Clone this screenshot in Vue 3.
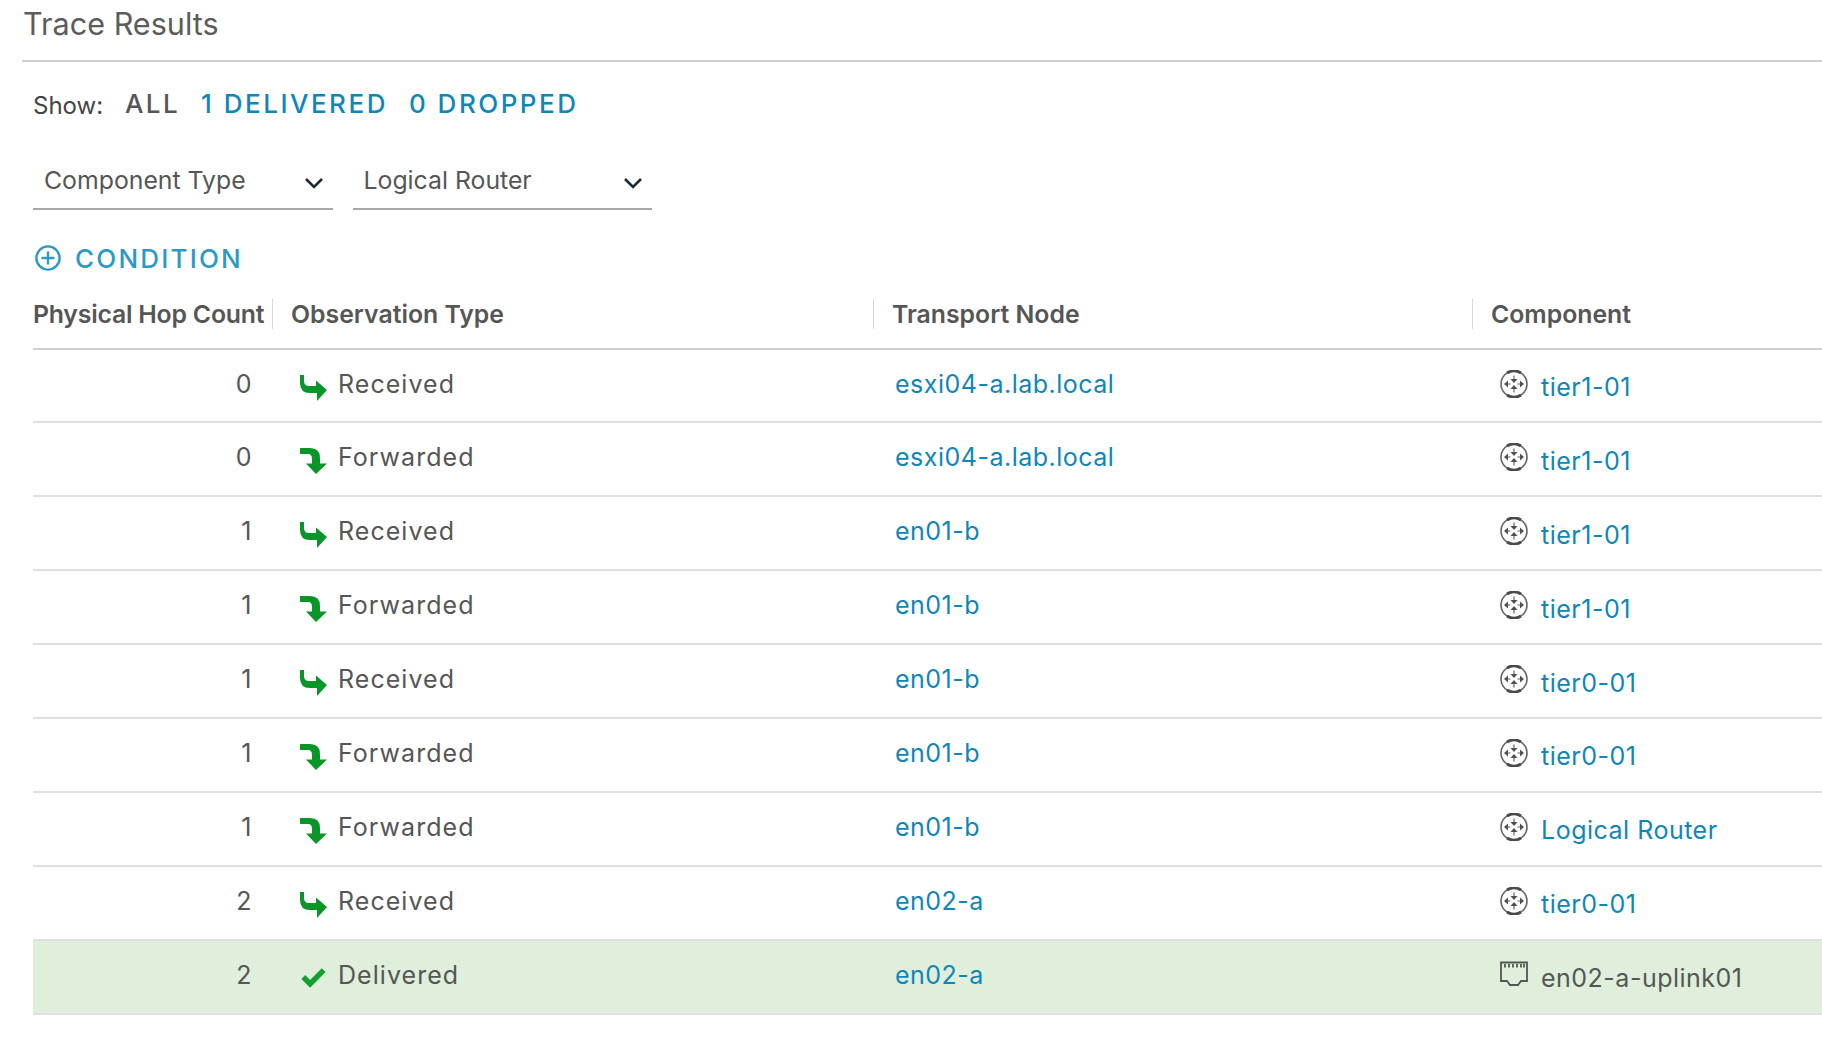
<script setup>
const rows = [
  { hop: 0, type: 'Received', node: 'esxi04-a.lab.local', comp: 'tier1-01' },
  { hop: 0, type: 'Forwarded', node: 'esxi04-a.lab.local', comp: 'tier1-01' },
  { hop: 1, type: 'Received', node: 'en01-b', comp: 'tier1-01' },
  { hop: 1, type: 'Forwarded', node: 'en01-b', comp: 'tier1-01' },
  { hop: 1, type: 'Received', node: 'en01-b', comp: 'tier0-01' },
  { hop: 1, type: 'Forwarded', node: 'en01-b', comp: 'tier0-01' },
  { hop: 1, type: 'Forwarded', node: 'en01-b', comp: 'Logical Router' },
  { hop: 2, type: 'Received', node: 'en02-a', comp: 'tier0-01' },
  { hop: 2, type: 'Delivered', node: 'en02-a', comp: 'en02-a-uplink01', delivered: true },
]
</script>

<template>
  <div class="page">
    <h2 class="title">Trace Results</h2>

    <div class="show">
      <span class="show-label">Show:</span>
      <span class="tab all">ALL</span>
      <span class="tab">1 DELIVERED</span>
      <span class="tab">0 DROPPED</span>
    </div>

    <div class="filters">
      <div class="select">
        <span>Component Type</span>
        <svg class="chev" viewBox="0 0 20 12"><path d="M2 2l8 8 8-8" /></svg>
      </div>
      <div class="select">
        <span>Logical Router</span>
        <svg class="chev" viewBox="0 0 20 12"><path d="M2 2l8 8 8-8" /></svg>
      </div>
    </div>

    <div class="condition">
      <svg class="plus" viewBox="0 0 26 26">
        <circle cx="13" cy="13" r="11.6" />
        <path d="M13 6.5v13M6.5 13h13" />
      </svg>
      <span>CONDITION</span>
    </div>

    <div class="table">
      <div class="row thead">
        <div class="hc hop-h">Physical Hop Count</div>
        <div class="hc sep">Observation Type</div>
        <div class="hc sep">Transport Node</div>
        <div class="hc sep">Component</div>
      </div>

      <div v-for="(r, i) in rows" :key="i" class="row body" :class="{ delivered: r.delivered }">
        <div class="cell hop">{{ r.hop }}</div>
        <div class="cell obs">
          <svg v-if="r.type === 'Received'" class="status" viewBox="0 0 27 26">
            <path d="M0 0H4V6Q4 11 9 11H16V5.5L27 15L17 26V18H10Q0 18 0 8Z" />
          </svg>
          <svg v-else-if="r.type === 'Forwarded'" class="status" viewBox="0 0 27 26">
            <path d="M0 0H10Q20 0 20 10V15.5H27L16 26L6 15.5H12V11Q12 6 8 6H0Z" />
          </svg>
          <svg v-else class="status check" viewBox="0 0 27 26">
            <path d="M1 16L5 12L10 17L22 5L26 9L10 25Z" />
          </svg>
          <span>{{ r.type }}</span>
        </div>
        <div class="cell node"><span class="link">{{ r.node }}</span></div>
        <div class="cell comp">
          <svg v-if="!r.delivered" class="cicon" viewBox="0 0 28 28">
            <circle class="ring" cx="14" cy="14" r="13" />
            <path class="cap" d="M7 3A13 13 0 0 1 21 3M7 25A13 13 0 0 0 21 25" />
            <path class="shaft" d="M14 5.5v4M14 18.5v4M5 14h5.5M17.5 14h5.5" />
            <path class="arrow" d="M10.5 9h7L14 13zM10.5 19h7L14 15zM4 14l4-3.4v6.8zM24 14l-4-3.4v6.8z" />
          </svg>
          <svg v-else class="cicon" viewBox="0 0 28 28">
            <path class="port" d="M1 1.5H27V20H21L18 24H10L7 20H1Z" />
            <path class="port-pins" d="M5 3v3.5M9 3v3.5M13 3v3.5M17 3v3.5M21 3v3.5M24 3v3.5" />
          </svg>
          <span :class="{ link: !r.delivered }">{{ r.comp }}</span>
        </div>
      </div>
    </div>
  </div>
</template>

<style scoped>
.page {
  width: 1822px;
  height: 1038px;
  overflow: hidden;
  background: #fff;
  font-family: Inter, "Open Sans", "Liberation Sans", sans-serif;
  color: #565656;
  box-sizing: border-box;
  padding-left: 22px;
}
.title {
  margin: 0;
  height: 60px;
  border-bottom: 2px solid #cfcfcf;
  font-size: 30.6px;
  font-weight: 400;
  line-height: 47px;
  padding-left: 1px;
  color: #5c5c5c;
}
.show {
  display: flex;
  align-items: center;
  margin: 25px 0 0 11px;
  height: 32px;
}
.show-label {
  width: 92px;
  font-size: 24px;
  color: #444;
  padding-top: 4px;
}
.tab {
  color: #0f86b8;
  font-weight: 500;
  letter-spacing: 2.5px;
  font-size: 26px;
  margin-right: 21px;
}
.tab.all {
  color: #565656;
  letter-spacing: 2.4px;
  margin-right: 21px;
}
.filters {
  display: flex;
  gap: 20px;
  margin: 34px 0 0 11px;
}
.select {
  width: 299.5px;
  height: 57px;
  box-sizing: border-box;
  border-bottom: 2px solid #a8a8a8;
  padding: 0 9px 0 11px;
  display: flex;
  align-items: center;
  justify-content: space-between;
  font-size: 24.8px;
  color: #565656;
}
.select span {
  margin-top: -1px;
}
.chev {
  width: 20px;
  height: 12px;
  margin-top: 5px;
  fill: none;
  stroke: #1c2a36;
  stroke-width: 2.6;
}
.condition {
  display: flex;
  align-items: center;
  gap: 14px;
  margin: 33px 0 0 13px;
  height: 30px;
  font-size: 26px;
  font-weight: 500;
  letter-spacing: 2.2px;
  color: #2b9ac6;
}
.plus {
  width: 26px;
  height: 26px;
  fill: none;
  stroke: #2b9ac6;
  stroke-width: 2.4;
}
.table {
  margin: 18px 0 0 11px;
}
.row {
  display: grid;
  grid-template-columns: 239px 601px 599px 1fr;
  box-sizing: border-box;
  border-bottom: 2px solid #e0e0e0;
}
.thead {
  height: 58.5px;
  padding-bottom: 10px;
  border-bottom-color: #cfcfcf;
  align-items: center;
}
.hc {
  font-size: 24.8px;
  font-weight: 600;
  color: #565656;
  white-space: nowrap;
  height: 30px;
  line-height: 30px;
}
.hop-h {
  letter-spacing: -0.2px;
}
.sep {
  border-left: 1px solid #d8d8d8;
  padding-left: 18px;
}
.body {
  height: 73.9px;
  font-size: 25px;
  letter-spacing: 0.5px;
}
.delivered {
  background: #dfefdb;
}
.cell {
  padding-top: 20px;
  line-height: 28px;
}
.hop {
  text-align: right;
  padding-right: 20px;
}
.obs {
  display: flex;
  align-items: flex-start;
  padding-left: 28px;
  gap: 11px;
  letter-spacing: 1.05px;
}
.status {
  width: 27px;
  height: 26px;
  margin-top: 5px;
  fill: #0a9528;
  flex: none;
}
.check {
  fill: #12a12f;
  transform: translateY(-3px) scale(0.97);
}
.node {
  padding-left: 22px;
}
.link {
  color: #0f86b8;
}
.comp {
  display: flex;
  align-items: flex-start;
  padding-left: 28px;
  gap: 13px;
}
.comp span {
  margin-top: 3.5px;
}
.cicon {
  width: 28px;
  height: 28px;
  flex: none;
}
.ring {
  fill: none;
  stroke: #666;
  stroke-width: 1.6;
}
.cap {
  fill: none;
  stroke: #4a4a4a;
  stroke-width: 2.8;
}
.shaft {
  fill: none;
  stroke: #666;
  stroke-width: 1.2;
}
.arrow {
  fill: #505050;
}
.port {
  fill: none;
  stroke: #555;
  stroke-width: 1.8;
}
.port-pins {
  fill: none;
  stroke: #555;
  stroke-width: 1.8;
}
</style>
